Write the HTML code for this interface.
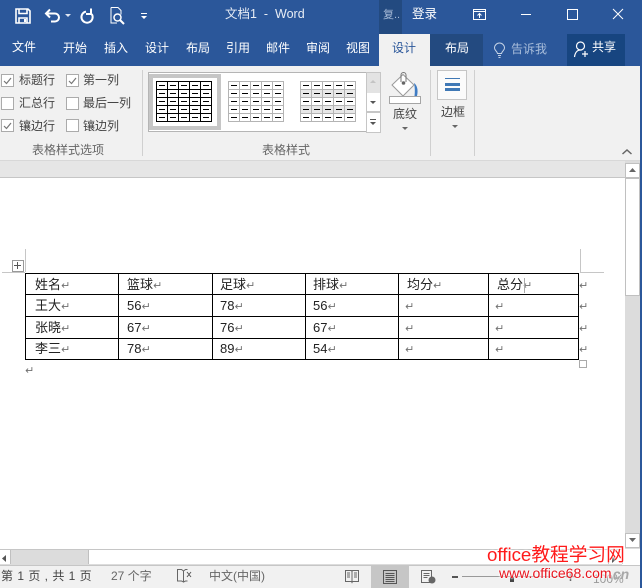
<!DOCTYPE html>
<html><head><meta charset="utf-8">
<style>
html,body{margin:0;padding:0}
body{width:642px;height:588px;position:relative;overflow:hidden;background:#fff;font-family:"Liberation Sans","Noto Sans CJK SC",sans-serif;font-size:12px}
.a{position:absolute}
.t{position:absolute;white-space:nowrap;line-height:16px;height:16px}
.w{color:#fff}
.l{color:#444}
.g{color:#666}
.c{position:absolute;width:11px;height:11px;border:1px solid #ababab;background:#fff}
.d{position:absolute;white-space:nowrap;line-height:16px;height:16px;color:#222;font-size:13px;font-family:"Liberation Sans","WenQuanYi Zen Hei",sans-serif}
.r{color:#707070;font-size:11px;font-family:"DejaVu Sans",sans-serif;margin-left:0}
.sep{position:absolute;width:1px;background:#d0d0d0}
svg{position:absolute;display:block;overflow:visible}
</style></head><body>
<!-- title / tabs background -->
<div class="a" style="left:0;top:0;width:642px;height:66px;background:#2b579a"></div>
<div class="a" style="left:379px;top:0;width:23px;height:34px;background:#234a80"></div>
<div class="a" style="left:379px;top:34px;width:51px;height:32px;background:#f1f1f1"></div>
<div class="a" style="left:430px;top:34px;width:53px;height:32px;background:#234a80"></div>
<div class="a" style="left:567px;top:34px;width:58px;height:32px;background:#174580"></div>
<!-- QAT icons -->
<svg style="left:15px;top:8px" width="16" height="16" viewBox="0 0 16 16"><path d="M1 1h12l2 2v12H1z M4 1.500v4h8v-4 M4 15v-5h8v5" fill="none" stroke="#fff" stroke-width="1.600"/><rect x="9" y="11" width="2" height="3" fill="#fff"/></svg>
<svg style="left:45px;top:8px" width="16" height="15" viewBox="0 0 16 15"><path d="M1 5.500h9a4 4 0 0 1 0 8H6 M5 1.500L1 5.500l4 4" fill="none" stroke="#fff" stroke-width="2"/></svg>
<svg style="left:65px;top:14px" width="6" height="4" viewBox="0 0 6 4"><path d="M0 0h6L3 3z" fill="#dfe6f1"/></svg>
<svg style="left:80px;top:8px" width="14" height="15" viewBox="0 0 14 15"><path d="M6 3.600A5.600 5.600 0 1 0 11.700 6" fill="none" stroke="#fff" stroke-width="2"/><path d="M11 .5v5.500H6" fill="none" stroke="#fff" stroke-width="2"/></svg>
<svg style="left:110px;top:7px" width="16" height="18" viewBox="0 0 16 18"><path d="M1 .5h7l3 3v4 M1 .5v15.500h6" fill="none" stroke="#fff"/><circle cx="7.500" cy="10.500" r="3.500" fill="none" stroke="#fff" stroke-width="1.500"/><path d="M10 13l4 4" stroke="#fff" stroke-width="2"/></svg>
<svg style="left:141px;top:13px" width="6" height="6" viewBox="0 0 6 6"><path d="M0 0h6v1H0z M0 3h6L3 6z" fill="#fff"/></svg>
<span class="t w" style="left:225px;top:6px;font-size:12.500px;color:#e8edf5">文档1 &nbsp;- &nbsp;Word</span>
<span class="t" style="left:383px;top:7px;font-size:11px;color:#a8bcd8">复..</span>
<span class="t w" style="left:412px;top:6px;font-size:12.500px">登录</span>
<!-- window controls -->
<svg style="left:473px;top:9px" width="13" height="11" viewBox="0 0 13 11"><path d="M.5.500h12v10H.5z M.5 2.500h12" fill="none" stroke="#fff"/><path d="M6.500 9V4.500M4.500 6.500l2-2 2 2" fill="none" stroke="#fff"/></svg>
<div class="a" style="left:521px;top:14px;width:10px;height:1px;background:#fff"></div>
<div class="a" style="left:567px;top:9px;width:9px;height:9px;border:1px solid #fff"></div>
<svg style="left:613px;top:9px" width="10" height="10" viewBox="0 0 10 10"><path d="M0 0l10 10M10 0L0 10" stroke="#fff" fill="none"/></svg>
<!-- Tabs -->
<span class="t w" style="left:12px;top:39px">文件</span>
<span class="t w" style="left:63px;top:40px">开始</span>
<span class="t w" style="left:104px;top:40px">插入</span>
<span class="t w" style="left:145px;top:40px">设计</span>
<span class="t w" style="left:186px;top:40px">布局</span>
<span class="t w" style="left:226px;top:40px">引用</span>
<span class="t w" style="left:266px;top:40px">邮件</span>
<span class="t w" style="left:306px;top:40px">审阅</span>
<span class="t w" style="left:346px;top:40px">视图</span>
<span class="t" style="left:392px;top:40px;color:#2b579a">设计</span>
<span class="t w" style="left:445px;top:40px">布局</span>
<svg style="left:494px;top:43px" width="11" height="15" viewBox="0 0 11 15"><path d="M3.500 10.500C3 8 .5 7.500.5 5a5 5 0 0 1 10 0c0 2.500-2.500 3-3 5.500z M4 12.500h3 M4.500 14.500h2" fill="none" stroke="#c5d3e6"/></svg>
<span class="t" style="left:511px;top:41px;color:#a9bedb">告诉我</span>
<svg style="left:574px;top:41px" width="16" height="17" viewBox="0 0 16 17"><circle cx="6.500" cy="5" r="4" fill="none" stroke="#fff" stroke-width="1.200"/><path d="M.5 16c.5-4 2.500-7 6-7" fill="none" stroke="#fff" stroke-width="1.200"/><path d="M11 10v6M8 13h6" stroke="#fff" stroke-width="1.200"/></svg>
<span class="t w" style="left:592px;top:39px">共享</span>
<!-- Ribbon -->
<div class="a" style="left:0;top:66px;width:640px;height:94px;background:#f1f1f1"></div>
<div class="a" style="left:0;top:160px;width:640px;height:1px;background:#d8d8d8"></div>
<div class="a" style="left:0;top:161px;width:640px;height:16px;background:#e6e6e6"></div>
<div class="a" style="left:0;top:177px;width:625px;height:1px;background:#c6c6c6"></div>
<div class="a" style="left:640px;top:0;width:2px;height:588px;background:#2b579a"></div>
<!-- Checkboxes -->
<div class="c" style="left:1px;top:74px"></div>
<div class="c" style="left:1px;top:97px"></div>
<div class="c" style="left:1px;top:119px"></div>
<div class="c" style="left:66px;top:74px"></div>
<div class="c" style="left:66px;top:97px"></div>
<div class="c" style="left:66px;top:119px"></div>
<svg style="left:3px;top:77px" width="9" height="8" viewBox="0 0 9 8"><path d="M1 4l2.500 2.500L8 1" fill="none" stroke="#777" stroke-width="1.200"/></svg>
<svg style="left:68px;top:77px" width="9" height="8" viewBox="0 0 9 8"><path d="M1 4l2.500 2.500L8 1" fill="none" stroke="#777" stroke-width="1.200"/></svg>
<svg style="left:3px;top:122px" width="9" height="8" viewBox="0 0 9 8"><path d="M1 4l2.500 2.500L8 1" fill="none" stroke="#777" stroke-width="1.200"/></svg>
<span class="t l" style="left:19px;top:72px">标题行</span>
<span class="t l" style="left:19px;top:95px">汇总行</span>
<span class="t l" style="left:19px;top:118px">镶边行</span>
<span class="t l" style="left:83px;top:72px">第一列</span>
<span class="t l" style="left:83px;top:95px">最后一列</span>
<span class="t l" style="left:83px;top:118px">镶边列</span>
<span class="t g" style="left:32px;top:142px">表格样式选项</span>
<div class="sep" style="left:142px;top:70px;height:86px"></div>
<!-- Gallery -->
<div class="a" style="left:148px;top:72px;width:217px;height:58px;background:#fff;border:1px solid #b5b5b5"></div>
<div class="a" style="left:149px;top:74px;width:64px;height:48px;border:4px solid #c6c6c6"></div>
<svg style="left:148px;top:72px" width="218" height="60" viewBox="148 72 218 60" shape-rendering="crispEdges">
<defs>
<pattern id="k" x="156" y="81" width="11" height="8" patternUnits="userSpaceOnUse"><path d="M0 .5h11M.5 0v8" stroke="#000"/><path d="M3 4.500h6" stroke="#000"/></pattern>
<pattern id="m" x="228" y="81" width="11" height="8" patternUnits="userSpaceOnUse"><path d="M0 .5h11M.5 0v8" stroke="#b4b4b4"/><path d="M3 4.500h6" stroke="#000"/></pattern>
<pattern id="n" x="300" y="81" width="11" height="16" patternUnits="userSpaceOnUse"><rect width="11" height="8" fill="#fff"/><rect y="8" width="11" height="8" fill="#e8e8e8"/><path d="M0 .5h11M0 8.500h11M.5 0v16" stroke="#b4b4b4"/><path d="M3 4.500h6M3 12.500h6" stroke="#000"/></pattern>
</defs>
<rect x="156.500" y="81.500" width="55" height="40" fill="url(#k)" stroke="#000"/>
<rect x="228.500" y="81.500" width="55" height="40" fill="url(#m)" stroke="#b4b4b4"/>
<rect x="300.500" y="81.500" width="55" height="40" fill="url(#n)" stroke="#b4b4b4"/>
</svg>
<div class="a" style="left:366px;top:72px;width:13px;height:20px;background:#e3e3e3;border:1px solid #c6c6c6"></div>
<div class="a" style="left:366px;top:93px;width:13px;height:18px;background:#fff;border:1px solid #c6c6c6;border-top:0"></div>
<div class="a" style="left:366px;top:112px;width:13px;height:19px;background:#fff;border:1px solid #c6c6c6"></div>
<svg style="left:370px;top:80px" width="6" height="4" viewBox="0 0 6 4"><path d="M0 3h6L3 0z" fill="#c4c4c4"/></svg>
<svg style="left:370px;top:101px" width="6" height="4" viewBox="0 0 6 4"><path d="M0 0h6L3 3z" fill="#555"/></svg>
<svg style="left:370px;top:119px" width="6" height="7" viewBox="0 0 6 7"><path d="M0 0h6v1H0z M0 3h6L3 6z" fill="#555"/></svg>
<span class="t g" style="left:262px;top:142px">表格样式</span>
<!-- Bucket -->
<svg style="left:389px;top:71px" width="32" height="34" viewBox="0 0 32 34"><path d="M25 12c3 2 4.500 7 3 13h-2.500c.5-4 .5-8-.5-13z" fill="#3f7cc4"/><path d="M14 3.500L25 14 14 25 3 14z" fill="#fff" stroke="#9a9a9a"/><path d="M12 11V4a2.500 2.500 0 0 1 5 0v7" fill="none" stroke="#777"/><circle cx="14.500" cy="12" r="1.800" fill="#666"/><rect x=".5" y="25.500" width="31" height="7" fill="#fff" stroke="#a5a5a5"/></svg>
<span class="t l" style="left:393px;top:106px">底纹</span>
<svg style="left:402px;top:127px" width="6" height="4" viewBox="0 0 6 4"><path d="M0 0h6L3 3z" fill="#666"/></svg>
<div class="sep" style="left:430px;top:70px;height:86px"></div>
<div class="a" style="left:437px;top:70px;width:28px;height:28px;border:1px solid #c6c6c6;background:#fbfbfb"></div>
<div class="a" style="left:445px;top:78px;width:15px;height:1px;background:#3f78b5"></div>
<div class="a" style="left:445px;top:83px;width:15px;height:3px;background:#3f78b5"></div>
<div class="a" style="left:445px;top:88px;width:15px;height:3px;background:#3f78b5"></div>
<span class="t l" style="left:441px;top:104px">边框</span>
<svg style="left:452px;top:125px" width="6" height="4" viewBox="0 0 6 4"><path d="M0 0h6L3 3z" fill="#666"/></svg>
<div class="sep" style="left:474px;top:70px;height:86px"></div>
<svg style="left:622px;top:149px" width="10" height="6" viewBox="0 0 10 6"><path d="M.5 5L5 1l4.500 4" fill="none" stroke="#666" stroke-width="1.500"/></svg>
<!-- Page margin marks -->
<div class="a" style="left:25px;top:249px;width:1px;height:23px;background:#c6c6c6"></div>
<div class="a" style="left:2px;top:272px;width:23px;height:1px;background:#c6c6c6"></div>
<div class="a" style="left:580px;top:249px;width:1px;height:23px;background:#c6c6c6"></div>
<div class="a" style="left:580px;top:272px;width:24px;height:1px;background:#c6c6c6"></div>
<!-- Move handle -->
<div class="a" style="left:12px;top:260px;width:10px;height:10px;border:1px solid #999;background:#fff"></div>
<svg style="left:14px;top:262px" width="7" height="7" viewBox="0 0 7 7" shape-rendering="crispEdges"><path d="M3.500 0v7M0 3.500h7" stroke="#555"/></svg>
<!-- Table lines -->
<svg style="left:24px;top:272px" width="557" height="90" viewBox="24 272 557 90" shape-rendering="crispEdges">
<g stroke="#000" stroke-width="1" fill="none">
<path d="M25.500 273.500h553M25.500 294.500h553M25.500 316.500h553M25.500 338.500h553M25.500 359.500h553"/>
<path d="M25.500 273v87M118.500 273v87M212.500 273v87M305.500 273v87M398.500 273v87M488.500 273v87M578.500 273v87"/>
</g></svg>
<!-- Table text -->
<span class="d" style="left:35px;top:277px">姓名<span class="r">↵</span></span>
<span class="d" style="left:127px;top:277px">篮球<span class="r">↵</span></span>
<span class="d" style="left:220px;top:277px">足球<span class="r">↵</span></span>
<span class="d" style="left:313px;top:277px">排球<span class="r">↵</span></span>
<span class="d" style="left:407px;top:277px">均分<span class="r">↵</span></span>
<span class="d" style="left:497px;top:277px">总分<span class="r">↵</span></span>
<div class="a" style="left:524px;top:278px;width:1px;height:15px;background:#aaa"></div>
<span class="d" style="left:35px;top:298px">王大<span class="r">↵</span></span>
<span class="d" style="left:127px;top:298px">56<span class="r">↵</span></span>
<span class="d" style="left:220px;top:298px">78<span class="r">↵</span></span>
<span class="d" style="left:313px;top:298px">56<span class="r">↵</span></span>
<span class="d" style="left:405px;top:298px"><span class="r">↵</span></span>
<span class="d" style="left:495px;top:298px"><span class="r">↵</span></span>
<span class="d" style="left:35px;top:320px">张晓<span class="r">↵</span></span>
<span class="d" style="left:127px;top:320px">67<span class="r">↵</span></span>
<span class="d" style="left:220px;top:320px">76<span class="r">↵</span></span>
<span class="d" style="left:313px;top:320px">67<span class="r">↵</span></span>
<span class="d" style="left:405px;top:320px"><span class="r">↵</span></span>
<span class="d" style="left:495px;top:320px"><span class="r">↵</span></span>
<span class="d" style="left:35px;top:341px">李三<span class="r">↵</span></span>
<span class="d" style="left:127px;top:341px">78<span class="r">↵</span></span>
<span class="d" style="left:220px;top:341px">89<span class="r">↵</span></span>
<span class="d" style="left:313px;top:341px">54<span class="r">↵</span></span>
<span class="d" style="left:405px;top:341px"><span class="r">↵</span></span>
<span class="d" style="left:495px;top:341px"><span class="r">↵</span></span>
<span class="d" style="left:579px;top:277px"><span class="r">↵</span></span>
<span class="d" style="left:579px;top:298px"><span class="r">↵</span></span>
<span class="d" style="left:579px;top:320px"><span class="r">↵</span></span>
<span class="d" style="left:579px;top:341px"><span class="r">↵</span></span>
<span class="d" style="left:25px;top:362px"><span class="r">↵</span></span>
<div class="a" style="left:579px;top:360px;width:6px;height:6px;border:1px solid #aaa;background:#fff"></div>
<!-- Vertical scrollbar -->
<div class="a" style="left:625px;top:161px;width:15px;height:388px;background:#dcdcdc"></div>
<div class="a" style="left:625px;top:163px;width:13px;height:13px;background:#fff;border:1px solid #c0c0c0"></div>
<svg style="left:629px;top:168px" width="7" height="4" viewBox="0 0 7 4"><path d="M0 4h7L3.500 0z" fill="#666"/></svg>
<div class="a" style="left:625px;top:178px;width:13px;height:116px;background:#fff;border:1px solid #c0c0c0"></div>
<div class="a" style="left:625px;top:533px;width:13px;height:13px;background:#fff;border:1px solid #c0c0c0"></div>
<svg style="left:629px;top:538px" width="7" height="4" viewBox="0 0 7 4"><path d="M0 0h7L3.500 4z" fill="#666"/></svg>
<!-- Horizontal scrollbar -->
<div class="a" style="left:0;top:549px;width:622px;height:1px;background:#c6c6c6"></div>
<div class="a" style="left:0;top:550px;width:622px;height:15px;background:#dcdcdc"></div>
<div class="a" style="left:0;top:550px;width:10px;height:14px;background:#fff;border-right:1px solid #c0c0c0"></div>
<svg style="left:2px;top:555px" width="4" height="7" viewBox="0 0 4 7"><path d="M4 0v7L0 3.500z" fill="#555"/></svg>
<div class="a" style="left:88px;top:550px;width:519px;height:14px;background:#fff;border-left:1px solid #c0c0c0"></div>
<div class="a" style="left:608px;top:550px;width:13px;height:14px;background:#fff;border:1px solid #c0c0c0;border-top:0;border-bottom:0"></div>
<svg style="left:612px;top:556px" width="4" height="7" viewBox="0 0 4 7"><path d="M0 0v7l4-3.500z" fill="#555"/></svg>
<div class="a" style="left:0;top:565px;width:640px;height:1px;background:#c6c6c6"></div>
<!-- Status bar -->
<div class="a" style="left:0;top:566px;width:640px;height:22px;background:#f1f1f1"></div>
<div class="a" style="left:371px;top:566px;width:38px;height:22px;background:#c6c6c6"></div>
<span class="t l" style="left:1px;top:568px;letter-spacing:.5px">第 1 页 , 共 1 页</span>
<span class="t g" style="left:111px;top:568px">27 个字</span>
<svg style="left:177px;top:569px" width="15" height="14" viewBox="0 0 15 14"><path d="M.5.500h4l2 1.500v11l-2-1h-4z M6.500 2l2-1.500h2M6.500 13l2-1h2" fill="none" stroke="#666"/><path d="M10 3l4 5M14 3l-4 5" stroke="#555"/></svg>
<span class="t g" style="left:209px;top:568px">中文(中国)</span>
<svg style="left:345px;top:570px" width="14" height="14" viewBox="0 0 14 14"><path d="M.5.500h6l.5 1 .5-1h6v11h-6l-.5 1-.5-1h-6z M7 1.500v10M2 3h3M2 5h3M2 7h3M9 3h3M9 5h3M9 7h3" fill="none" stroke="#666"/></svg>
<svg style="left:383px;top:570px" width="14" height="14" viewBox="0 0 14 14"><path d="M.5.500h13v13H.5z M2.500 3.500h9M2.500 5.500h9M2.500 7.500h9M2.500 9.500h9M2.500 11.500h9" fill="none" stroke="#555" shape-rendering="crispEdges"/></svg>
<svg style="left:421px;top:570px" width="15" height="14" viewBox="0 0 15 14"><path d="M.5.500h10v12H.5z M2.500 3.500h6M2.500 5.500h6M2.500 7.500h4" fill="none" stroke="#666"/><circle cx="11" cy="10" r="3.500" fill="#666"/></svg>
<div class="a" style="left:452px;top:576px;width:6px;height:2px;background:#555"></div>
<div class="a" style="left:462px;top:576px;width:110px;height:1px;background:#999"></div>
<div class="a" style="left:510px;top:577px;width:4px;height:5px;background:#444"></div>
<svg style="left:566px;top:572px" width="9" height="9" viewBox="0 0 9 9"><path d="M4.500 0v9M0 4.500h9" stroke="#666" stroke-width="1.500"/></svg>
<span class="t g" style="left:593px;top:571px;color:#999">100%</span>
<!-- Watermark -->
<span class="t" style="left:609px;top:566px;color:#a8a8a8;font-size:14px;font-weight:bold;font-style:italic">.cn</span>
<span class="t" style="left:487px;top:544px;height:22px;line-height:22px;color:#ff1a1a;font-size:18.700px;text-shadow:0 0 2px #fff,0 0 2px #fff,0 0 2px #fff">office教程学习网</span>
<span class="t" style="left:499px;top:565px;color:#e8141e;font-size:14px;text-shadow:0 0 2px #fff,0 0 2px #fff,0 0 2px #fff">www.office68.com</span>
</body></html>
